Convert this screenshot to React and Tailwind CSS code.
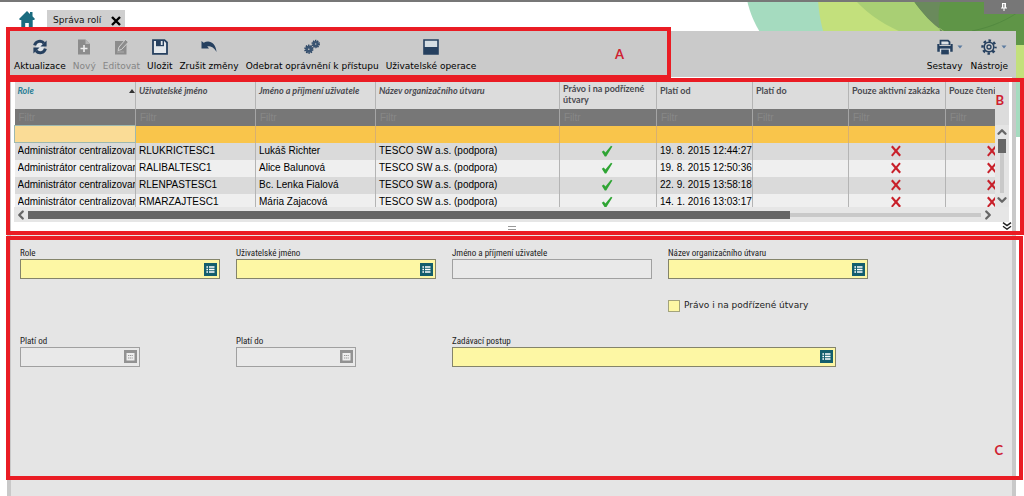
import { ChevronLeft, ChevronRight, ChevronUp, ChevronDown } from 'lucide-react';

const NAVY = '#26405f';

function HomeIcon() {
  return (
    <svg className="h-[18px] w-4" viewBox="0 0 16 18" fill="#1b6c80">
      <path d="M8 0 L11 3 V1 H13.5 V5.3 L16 8 L15 9 H13.7 V18 H9.8 V12 H6.2 V18 H2.3 V9 H1 L0 8 Z" />
    </svg>
  );
}

function RefreshIcon() {
  return (
    <svg className="h-4 w-4" viewBox="0 0 16 16" fill="none" stroke={NAVY} strokeWidth="3">
      <circle cx="8" cy="8" r="4" fill="#dfe3e7" stroke="none" />
      <path d="M2.6 6.4 A5.4 5.4 0 0 1 12 4.2" />
      <path d="M13.4 9.6 A5.4 5.4 0 0 1 4 11.8" />
      <path d="M14.6 1.6 V7.6 H8.4 Z M1.4 14.4 V8.4 H7.6 Z" fill={NAVY} stroke="none" />
    </svg>
  );
}

function NewIcon() {
  return (
    <svg className="h-4 w-4" viewBox="0 0 16 16">
      <path d="M2 0.5 H9.5 L14 5 V15.5 H2 Z" fill="#8c8c8c" />
      <path d="M9.5 0.5 V5 H14" fill="#b5b5b5" />
      <path d="M8 6 V13 M4.5 9.5 H11.5" stroke="#eee" strokeWidth="1.6" />
    </svg>
  );
}

function EditIcon() {
  return (
    <svg className="h-4 w-4" viewBox="0 0 16 16">
      <path d="M2 2 H13.5 V15.5 H2 Z" fill="#8c8c8c" />
      <path d="M5 11.5 L6 8 L12.5 0.5 L15.5 3 L8.5 10.5 Z" fill="#8c8c8c" stroke="#d4d4d4" strokeWidth="1" />
      <path d="M4 13 H11" stroke="#aaa" strokeWidth="1" />
    </svg>
  );
}

function SaveIcon() {
  return (
    <svg className="h-4 w-4" viewBox="0 0 16 16">
      <path d="M1 1.2 H12.5 L15 3.5 V14.8 H1 Z" fill="#e4e8ec" stroke={NAVY} strokeWidth="1.8" />
      <path d="M4 1 H12 V7.2 H4 Z" fill={NAVY} />
      <path d="M8.8 2 H10.6 V6 H8.8 Z" fill="#e4e8ec" />
    </svg>
  );
}

function UndoIcon() {
  return (
    <svg className="h-4 w-4" viewBox="0 0 16 16" fill={NAVY}>
      <path d="M0.5 2 L2.7 3.8 C8 0.6 14.5 3.2 15.6 13 C13.4 8.6 10 7 6.2 7.2 L8 9.6 H0.5 Z" />
    </svg>
  );
}

function GearsIcon() {
  return (
    <svg className="h-4 w-4" viewBox="0 0 16 16" fill="none" stroke={NAVY}>
      <circle cx="4.8" cy="10.2" r="3.6" strokeWidth="2" strokeDasharray="1.4 0.86" />
      <circle cx="4.8" cy="10.2" r="2.1" strokeWidth="2.6" stroke="#3a5472" />
      <circle cx="11.7" cy="5" r="3.3" strokeWidth="1.8" strokeDasharray="1.3 0.77" />
      <circle cx="11.7" cy="5" r="1.9" strokeWidth="2.4" stroke="#3a5472" />
    </svg>
  );
}

function WindowIcon() {
  return (
    <svg className="h-4 w-4" viewBox="0 0 16 16">
      <path d="M1 1 H15 V15 H1 Z" fill="#d5dde3" stroke={NAVY} strokeWidth="1.6" />
      <path d="M1 8 H15 V15 H1 Z" fill={NAVY} />
    </svg>
  );
}

function PrinterIcon() {
  return (
    <svg className="h-4 w-4" viewBox="0 0 16 16">
      <path d="M2.6 0.8 H11.4 L13.4 2.8 V6 H2.6 Z" fill={NAVY} />
      <path d="M4.4 2.4 H10.6 L11.6 3.6 V5.4 H4.4 Z" fill="#dde2e6" />
      <path d="M0.3 5 H2.4 V7 H13.6 V5 H15.7 V12.8 H0.3 Z" fill={NAVY} />
      <path d="M2.8 9.6 H13.2 V13 H2.8 Z" fill="#dde2e6" />
      <path d="M4.2 10.6 H11.8 V15.4 H4.2 Z" fill={NAVY} />
    </svg>
  );
}

function GearIcon() {
  return (
    <svg className="h-4 w-4" viewBox="0 0 16 16" fill="none" stroke={NAVY}>
      <circle cx="8" cy="8" r="6.5" strokeWidth="2.4" strokeDasharray="2.55 2.55" strokeDashoffset="1.27" />
      <circle cx="8" cy="8" r="4.8" strokeWidth="1.6" />
      <circle cx="8" cy="8" r="2" strokeWidth="1.3" />
    </svg>
  );
}

function Caret() {
  return (
    <svg className="h-1 w-1.5" viewBox="0 0 6 4" fill="#5b7ba0">
      <path d="M0.5 0.5 H5.5 L3 3.5 Z" />
    </svg>
  );
}

function CheckIcon() {
  return (
    <svg className="mx-auto h-3 w-3" viewBox="0 0 12 12">
      <path d="M0.8 6.8 L2.8 5.6 L4.4 7.6 L10 0.8 L11.4 1.4 L5.2 11.4 H3.8 Z" fill="#2fa534" />
    </svg>
  );
}

function CrossIcon() {
  return (
    <svg className="mx-auto h-3 w-3" viewBox="0 0 12 12" fill="none" stroke="#c8202a">
      <path d="M1.8 1.2 L10.2 10.8" strokeWidth="2.2" />
      <path d="M10 1.2 L1.8 10.8" strokeWidth="2" />
    </svg>
  );
}

function ListIcon() {
  return (
    <svg className="h-[13px] w-[13px]" viewBox="0 0 13 13">
      <path d="M0 0 H13 V13 H0 Z" fill="#135e6d" />
      <path d="M5 4 H10.5 M5 6.5 H10.5 M5 9 H10.5" stroke="#fff" strokeWidth="1.4" />
      <path d="M2.4 4 H4 M2.4 6.5 H4 M2.4 9 H4" stroke="#fff" strokeWidth="1.4" />
    </svg>
  );
}

function CalendarIcon() {
  return (
    <svg className="h-[13px] w-[13px]" viewBox="0 0 13 13">
      <path d="M0 0 H13 V13 H0 Z" fill="#929292" />
      <path d="M2.5 3 H10.5 V10.5 H2.5 Z" fill="#eee" />
      <path d="M4 5.5 H9 M4 8 H9" stroke="#999" strokeWidth="1" strokeDasharray="1.2 0.6" />
    </svg>
  );
}

function DoubleChevron() {
  return (
    <svg className="h-2 w-2.5" viewBox="0 0 10 8" fill="none" stroke="#222" strokeWidth="1.4">
      <path d="M1 0.6 L5 3.6 L9 0.6 M1 4.2 L5 7.2 L9 4.2" />
    </svg>
  );
}

function Backdrop() {
  return (
    <svg className="absolute top-0 right-0 h-[137px] w-[284px]" viewBox="0 0 284 137" aria-hidden="true">
      <path d="M276 34 H284 V137 H276 Z" fill="#a5dbbf" />
      <path d="M7 0 C10 14 15 24 21 34 H90 V0 Z" fill="#a5dbbf" />
      <path d="M78 0 C79 14 81 24 84 34 H276 V78 H284 V0 Z" fill="#c3e07c" />
      <path d="M115 0 C130 16 146 26 166 34 H240 V0 Z" fill="#a9cf74" />
      <path d="M173 0 C184 16 195 25 208 34 H276 V45 H284 V0 Z" fill="#5f9547" />
      <path d="M173 0 H201 C198 10 198 20 200 31 H203 C192 24 183 14 173 0 Z" fill="#6a8a5c" />
      <path d="M284 8 C268 20 252 27 232 31" fill="none" stroke="#538a40" strokeWidth="1" />
    </svg>
  );
}

function ToolButton({ icon, label, disabled, caret }) {
  return (
    <button type="button" disabled={disabled} className="flex flex-col items-center gap-[3px] text-black disabled:text-[#858585]">
      <span className="relative block">
        {icon}
        {caret && <span className="absolute top-1.5 left-5"><Caret /></span>}
      </span>
      <span className="leading-4 whitespace-nowrap">{label}</span>
    </button>
  );
}

const columns = [
  { label: 'Role', sorted: true, italic: true },
  { label: 'Uživatelské jméno', italic: true },
  { label: 'Jméno a příjmení uživatele', italic: true },
  { label: 'Název organizačního útvaru', italic: true },
  { label: 'Právo i na podřízené útvary', tall: true },
  { label: 'Platí od' },
  { label: 'Platí do' },
  { label: 'Pouze aktivní zakázka' },
  { label: 'Pouze čtení' },
];

const rows = [
  ['RLUKRICTESC1', 'Lukáš Richter', '19. 8. 2015 12:44:27'],
  ['RALIBALTESC1', 'Alice Balunová', '19. 8. 2015 12:50:36'],
  ['RLENPASTESC1', 'Bc. Lenka Fialová', '22. 9. 2015 13:58:18'],
  ['RMARZAJTESC1', 'Mária Zajacová', '14. 1. 2016 13:03:17'],
];

function RolesTable() {
  return (
    <div className="h-[126px] min-w-0 flex-1 overflow-hidden">
      <table className="w-[1027px] table-fixed border-collapse">
        <colgroup>
          <col className="w-[121px]" />
          <col className="w-[120px]" />
          <col className="w-[120px]" />
          <col className="w-[184px]" />
          <col className="w-[97px]" />
          <col className="w-[96px]" />
          <col className="w-[96px]" />
          <col className="w-[97px]" />
          <col className="w-[96px]" />
        </colgroup>
        <thead>
          <tr className="h-7 bg-[#dcdcdc] align-top">
            {columns.map((c) => (
              <th
                key={c.label}
                scope="col"
                className={`border-r border-[#b4b4b4] pr-1 pl-[3px] text-left font-["Lato",sans-serif] text-[9px] leading-[11px] font-bold ${c.italic ? 'italic' : ''} ${c.sorted ? 'text-[#2d7f96]' : 'text-[#4a4a50]'}`}
              >
                <span className={`flex justify-between ${c.tall ? 'pt-0.5' : 'pt-1'}`}>
                  {c.label}
                  {c.sorted && (
                    <svg className="mt-1 -mr-1 h-1 w-1.5" viewBox="0 0 6 4" fill="#333"><path d="M3 0 L6 4 H0 Z" /></svg>
                  )}
                </span>
              </th>
            ))}
          </tr>
          <tr className="h-4 bg-[#777777]">
            {columns.map((c) => (
              <td key={c.label} className="border-r border-[#a5a5a5] p-0">
                <input
                  aria-label={`Filtr ${c.label}`}
                  placeholder="Filtr"
                  className="block h-4 w-full bg-transparent px-1 font-['Liberation_Sans',sans-serif] text-[10px] text-white outline-none placeholder:text-[#878787]"
                />
              </td>
            ))}
          </tr>
        </thead>
        <tbody className="font-['Liberation_Sans',sans-serif] text-[10px] leading-4 whitespace-nowrap text-black">
          <tr className="h-[17px] bg-[#f9c54b]">
            {columns.map((c, i) => (
              <td key={c.label} className={i === 0 ? 'border border-[#9db8b0] bg-[#fadc96]' : 'border-r border-[#d8b070]'} />
            ))}
          </tr>
          {rows.map(([login, name, from]) => (
            <tr key={login} className="h-[17px] odd:bg-[#efefef] even:bg-[#dadada] [&>td]:overflow-hidden [&>td]:border-r [&>td]:border-[#b4b4b4] [&>td]:py-0 [&>td]:pl-[3px]">
              <td><div className="overflow-hidden">Administrátor centralizovan</div></td>
              <td>{login}</td>
              <td>{name}</td>
              <td>TESCO SW a.s. (podpora)</td>
              <td className="pr-1.5"><CheckIcon /></td>
              <td>{from}</td>
              <td />
              <td className="pr-1.5"><CrossIcon /></td>
              <td className="pr-1.5"><CrossIcon /></td>
            </tr>
          ))}
        </tbody>
      </table>
    </div>
  );
}

function Field({ id, label, kind = 'list', className = '' }) {
  const active = kind === 'list';
  return (
    <div className={className}>
      <label htmlFor={id} className="block font-['Roboto_Condensed','Liberation_Sans',sans-serif] text-[9px] leading-3 whitespace-nowrap text-[#222]">{label}</label>
      <div className={`flex h-5 items-center border pr-0.5 ${active ? 'border-[#84846a] bg-[#fdf7a4]' : 'border-[#a0a0a0] bg-[#e9e9e9]'}`}>
        <input id={id} disabled={!active} className="h-full w-full min-w-0 bg-transparent px-1 text-[10px] outline-none" />
        {kind === 'list' && <button type="button" aria-label={`Vybrat: ${label}`}><ListIcon /></button>}
        {kind === 'date' && <button type="button" disabled aria-label={`Kalendář: ${label}`}><CalendarIcon /></button>}
      </div>
    </div>
  );
}

function Callout({ className, letter, letterClass }) {
  return (
    <div className={`pointer-events-none absolute border-4 border-[#ea1c24] ${className}`}>
      <span className={`absolute font-["Lato",sans-serif] text-[13px] leading-3 font-bold text-[#cf2030] ${letterClass}`}>{letter}</span>
    </div>
  );
}

export default function App() {
  return (
    <div className="relative flex min-h-screen flex-col overflow-hidden bg-white font-['DejaVu_Sans',sans-serif] text-[9px]">
      <Backdrop />
      <div className="relative flex h-0.5 justify-end bg-[#777777]">
        <button type="button" aria-label="Připnout" className="flex h-3.5 w-10 items-center justify-center bg-[#777777]">
          <svg className="h-2 w-1.5" viewBox="0 0 6 8"><path d="M1 0 H5 V4.5 H6 V5.5 H3.5 V8 H2.5 V5.5 H0 V4.5 H1 Z" fill="#fff" /><path d="M2.3 1 H3.4 V4.5 H2.3 Z" fill="#777" /></svg>
        </button>
      </div>
      <nav className="relative flex h-[29px] items-end gap-3 pl-[19px]">
        <a href="#domu" aria-label="Domů" className="pb-0.5"><HomeIcon /></a>
        <div className="flex h-[21px] items-center gap-2.5 bg-[#cfcfcf] pr-1 pl-1.5">
          <a href="#sprava-roli" className="text-[#111]">Správa rolí</a>
          <button type="button" aria-label="Zavřít">
            <svg className="h-2.5 w-2.5" viewBox="0 0 10 10" stroke="#000" strokeWidth="2.4"><path d="M1 1 L9 9 M9 1 L1 9" /></svg>
          </button>
        </div>
      </nav>
      <header className="relative mx-2 flex h-[46px] items-start justify-between bg-[#cacaca] pt-2 pr-2 pl-1.5">
        <div className="flex gap-[7px]">
          <ToolButton icon={<RefreshIcon />} label="Aktualizace" />
          <ToolButton icon={<NewIcon />} label="Nový" disabled />
          <ToolButton icon={<EditIcon />} label="Editovat" disabled />
          <ToolButton icon={<SaveIcon />} label="Uložit" />
          <ToolButton icon={<UndoIcon />} label="Zrušit změny" />
          <ToolButton icon={<GearsIcon />} label="Odebrat oprávnění k přístupu" />
          <ToolButton icon={<WindowIcon />} label="Uživatelské operace" />
        </div>
        <div className="flex gap-2">
          <ToolButton icon={<PrinterIcon />} label="Sestavy" caret />
          <ToolButton icon={<GearIcon />} label="Nástroje" caret />
        </div>
      </header>
      <main className="relative mr-2 ml-[7px] flex flex-1 flex-col border-x-4 border-[#c9c9c9] bg-white">
        <section className="mx-[3px] pt-1">
          <div className="flex">
            <RolesTable />
            <div className="flex w-3.5 flex-col bg-[#e4e4e4]">
              <div className="h-11 bg-[#dcdcdc]" />
              <div className="flex flex-1 flex-col items-center justify-between">
                <ChevronUp className="h-3.5 w-3.5 text-[#666]" strokeWidth={4} />
                <div className="w-1 flex-1 bg-[#c9c9c9]">
                  <div className="-mx-0.5 h-3.5 bg-[#666]" />
                </div>
                <ChevronDown className="h-3.5 w-3.5 text-[#666]" strokeWidth={4} />
              </div>
            </div>
          </div>
          <div className="flex h-[15px] items-center bg-[#e6e6e6] pr-3.5">
            <ChevronLeft className="h-3.5 w-3.5 text-[#666]" strokeWidth={4} />
            <div className="h-1 flex-1 bg-[#c9c9c9]">
              <div className="-mt-0.5 h-2 w-[80%] bg-[#666]" />
            </div>
            <ChevronRight className="h-3.5 w-3.5 text-[#666]" strokeWidth={4} />
          </div>
        </section>
        <div className="relative flex h-3 items-center justify-center">
          <span className="h-1 w-2 border-y border-[#999]" />
          <button type="button" aria-label="Sbalit" className="absolute top-0 right-0 z-10"><DoubleChevron /></button>
        </div>
        <form className="flex-1 bg-[#e5e5e5] px-[9px] pt-[13px]">
          <div className="grid grid-cols-[repeat(4,200px)] gap-x-4">
            <Field id="role" label="Role" />
            <Field id="login" label="Uživatelské jméno" />
            <Field id="name" label="Jméno a příjmení uživatele" kind="plain" />
            <Field id="unit" label="Název organizačního útvaru" />
            <label className="col-start-4 mt-5 flex items-center gap-1 text-[#222]">
              <input type="checkbox" className="h-3 w-3 appearance-none border border-[#a3a37c] bg-[#fdf7a4] checked:bg-[#135e6d]" />
              Právo i na podřízené útvary
            </label>
            <Field id="from" label="Platí od" kind="date" className="col-start-1 mt-[22px] w-[120px]" />
            <Field id="to" label="Platí do" kind="date" className="mt-[22px] w-[120px]" />
            <Field id="procedure" label="Zadávací postup" className="col-span-2 mt-[22px] w-[384px]" />
          </div>
        </form>
      </main>
      <Callout className="top-[27px] left-1.5 h-[52px] w-[665px]" letter="A" letterClass="right-[43px] bottom-[15px]" />
      <Callout className="top-[78px] right-0 left-1.5 h-[157px]" letter="B" letterClass="top-3 right-4" />
      <Callout className="top-[236px] right-px left-1.5 h-[244px]" letter="C" letterClass="right-4 bottom-5" />
    </div>
  );
}
